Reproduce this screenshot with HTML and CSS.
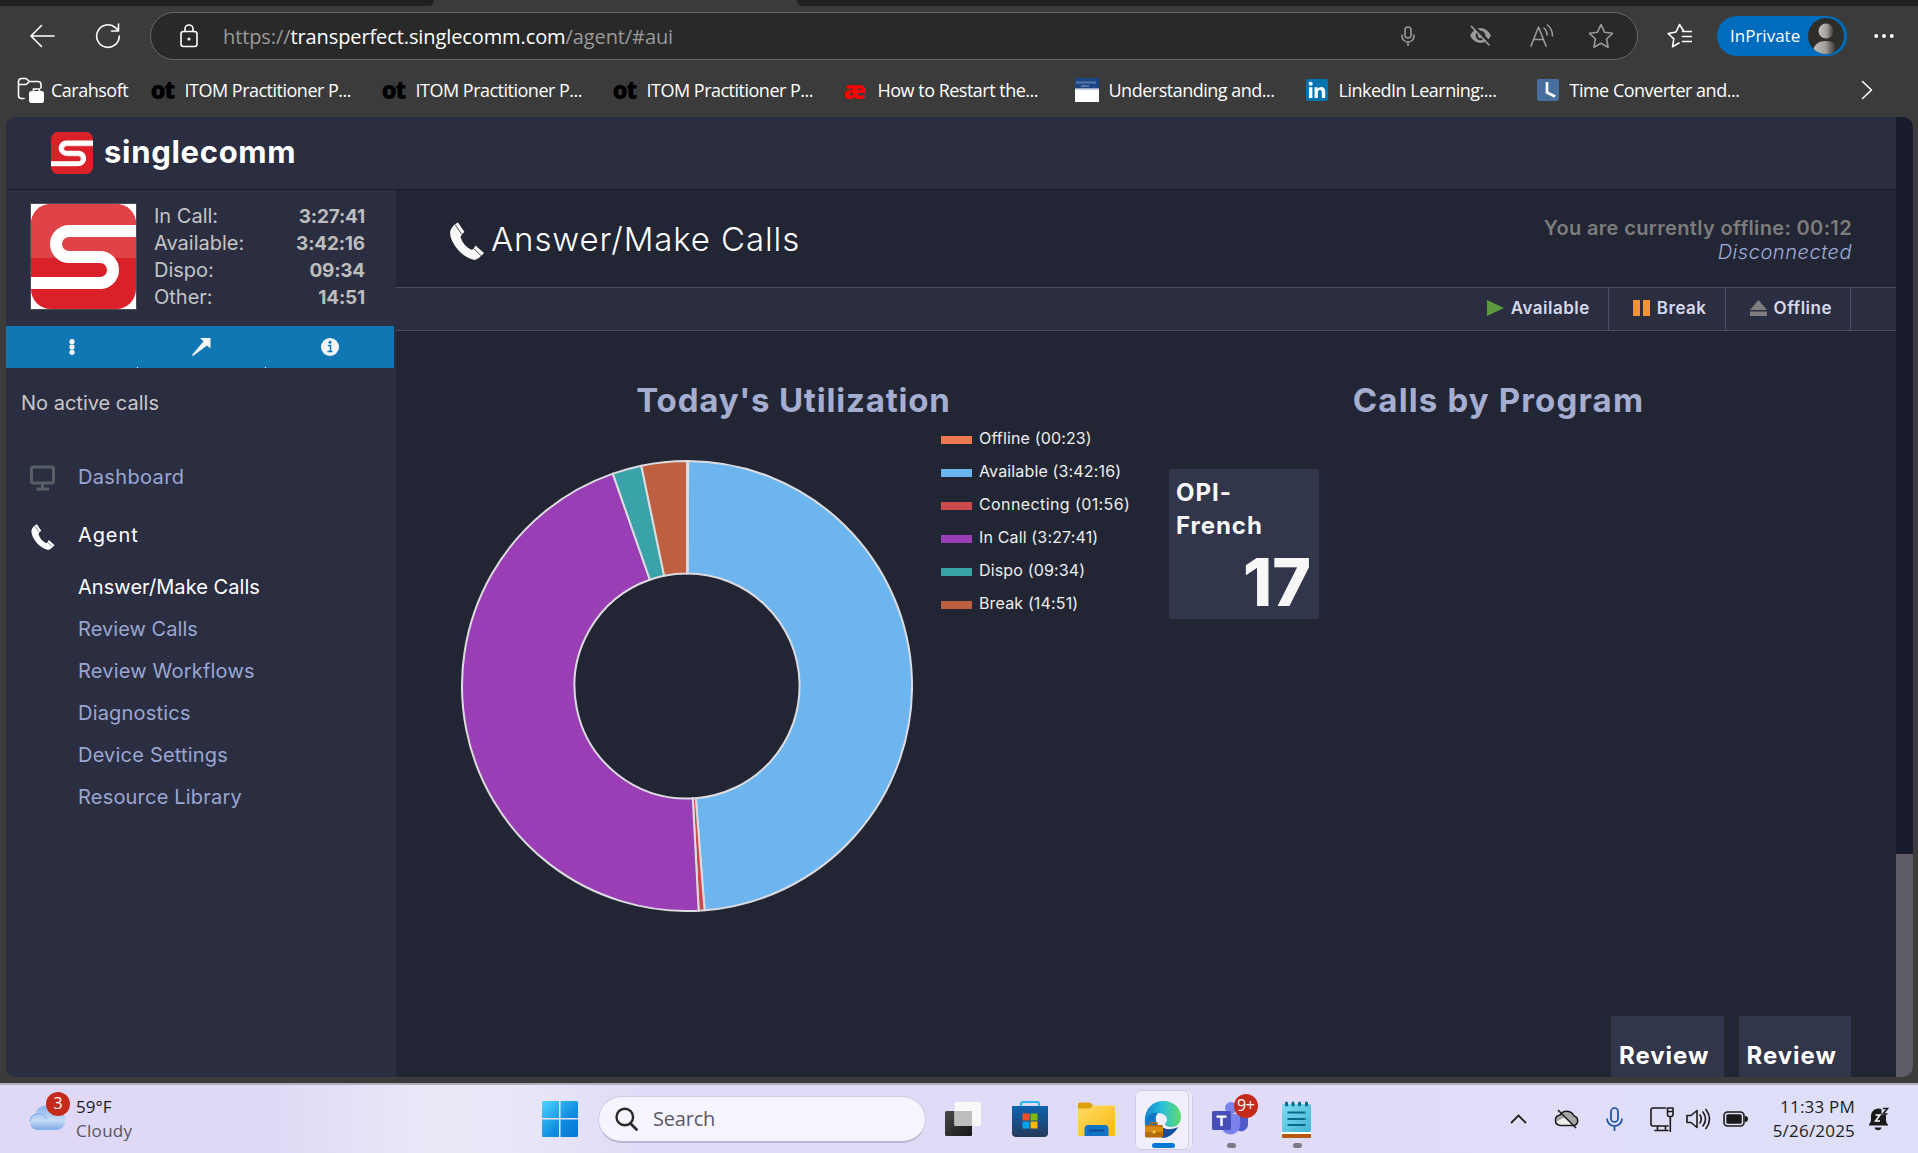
FILE: index.html
```html
<!DOCTYPE html>
<html lang="en">
<head>
<meta charset="utf-8">
<title>singlecomm – Answer/Make Calls</title>
<link rel="stylesheet" href="styles.css">
</head>
<body>
<div class="tabstrip"><div class="tab-active"></div></div>

<div class="toolbar">
  <svg class="nav-back" width="26" height="24" viewBox="0 0 26 24"><path d="M25 12H2M12.500 1.500 2 12l10.500 10.500" class="ln-w"/></svg>
  <svg class="nav-reload" width="26" height="26" viewBox="0 0 26 26"><path d="M24.300 13A11.300 11.300 0 1 1 20.500 4.600L23 7.500M23.500 1v7h-7" class="ln-w"/></svg>
  <div class="address">
    <svg width="18" height="24" viewBox="0 0 18 24"><rect x="1" y="7.500" width="16" height="15" rx="2.500" class="ln-w"/><path d="M5 7.500V5a4 4 0 0 1 8 0v2.500" class="ln-w"/><circle cx="9" cy="15" r="1.600" fill="#fff"/></svg>
    <span class="url">https://<b>transperfect.singlecomm.com</b>/agent/#aui</span>
    <svg class="ic-mic" width="14" height="20" viewBox="0 0 14 20"><rect x="4" y="1" width="6" height="11" rx="3" class="ln-g"/><path d="M1 9v1a6 6 0 0 0 12 0V9M7 16v4" class="ln-g"/></svg>
    <svg class="ic-eye" width="23" height="22" viewBox="0 0 23 22"><path d="M1 10.500Q5 3 11.500 3T22 10.500Q18 18 11.500 18T1 10.500z" fill="#9a9a9a"/><circle cx="11.500" cy="10.500" r="4.800" fill="#292929"/><circle cx="11.500" cy="10.500" r="2.600" fill="#9a9a9a"/><path d="M3.500 0 22 19" stroke="#292929" stroke-width="3"/><path d="M2 1l18.500 19.500" stroke="#9a9a9a" stroke-width="1.800"/></svg>
    <svg class="ic-read" width="24" height="24" viewBox="0 0 24 24"><path d="M1 22 8.500 3 16 22M3.700 15.500h9.600M14 4q3 2.500 3.200 7M17.500 1q4.800 4 5 11" class="ln-g"/></svg>
    <svg class="ic-star" width="26" height="26" viewBox="0 0 26 26"><path d="m13 1.700 3.500 7.500 8 1.100-5.900 5.700 1.500 8.200-7.100-4-7.100 4 1.500-8.200L1.500 10.300l8-1.100z" class="ln-g"/></svg>
  </div>
  <svg class="ic-fav" width="25" height="26" viewBox="0 0 25 26"><path d="M24 8.500h-7L12.500 1.500 9 9 1.200 10.500l5.600 5.300-1.300 8L12 20M15.500 13.500H25M15.500 18.500H25M15.500 8.500H25" class="ln-w"/></svg>
  <div class="inprivate"><span>InPrivate</span>
    <svg width="36" height="36" viewBox="0 0 36 36"><defs><clipPath id="av"><circle cx="18" cy="18" r="18"/></clipPath><linearGradient id="sil"><stop offset="0" stop-color="#c4c0bd"/><stop offset=".55" stop-color="#a29e9b"/><stop offset="1" stop-color="#3a3836"/></linearGradient></defs><g clip-path="url(#av)"><rect width="36" height="36" fill="#302e2b"/><circle cx="18" cy="13" r="7.500" fill="url(#sil)"/><path d="M5 36q0-13 13-13t8 13z" fill="url(#sil)"/></g></svg>
  </div>
  <svg class="ic-more" width="20" height="6" viewBox="0 0 20 6"><g fill="#fff"><circle cx="2.200" cy="3" r="1.900"/><circle cx="10" cy="3" r="1.900"/><circle cx="17.800" cy="3" r="1.900"/></g></svg>
</div>

<div class="bookmarks">
  <div class="bm bm-folder"><svg width="27" height="26" viewBox="0 0 27 26"><path d="M7 21.500H4.500a3 3 0 0 1-3-3V4.500a3 3 0 0 1 3-3H9l3.500 3H21a3 3 0 0 1 3 3V11M1.500 7.500h7.500l3.500-3" class="ln-w"/><rect x="12" y="14" width="15" height="12" rx="2.500" fill="#fff"/><path d="M16.500 14v-2h6v2" fill="none" stroke="#fff" stroke-width="1.600"/></svg><span>Carahsoft</span></div>
  <div class="bm"><i class="fav-ot">ot</i><span>ITOM Practitioner P...</span></div>
  <div class="bm"><i class="fav-ot">ot</i><span>ITOM Practitioner P...</span></div>
  <div class="bm"><i class="fav-ot">ot</i><span>ITOM Practitioner P...</span></div>
  <div class="bm"><i class="fav-ot fav-ae">æ</i><span>How to Restart the...</span></div>
  <div class="bm"><svg width="24" height="24" viewBox="0 0 24 24"><rect width="24" height="24" fill="#fff"/><rect width="24" height="10" fill="#1b4584"/><rect y="10" width="24" height="1.500" fill="#93a7c4"/><path d="M1 4.500h20M6 8h8" stroke="#5877a6" stroke-width="2"/></svg><span>Understanding and...</span></div>
  <div class="bm"><svg width="22" height="22" viewBox="0 0 22 22"><rect width="22" height="22" rx="2" fill="#0073b1"/><g fill="#fff"><circle cx="4.700" cy="4.700" r="2"/><path d="M3 8.200h3.400V19H3zM8.500 8.200h3.200v1.500q1.200-1.800 3.500-1.800 4 0 4 4.800V19h-3.400v-5.700q0-2.500-1.900-2.500-2 0-2 2.500V19H8.500z"/></g></svg><span>LinkedIn Learning:...</span></div>
  <div class="bm"><svg width="22" height="22" viewBox="0 0 22 22"><rect width="22" height="22" rx="2" fill="#48709f"/><path d="M10 3v10.500l8 4" fill="none" stroke="#fff" stroke-width="2.600"/></svg><span>Time Converter and...</span></div>
  <svg class="bm-next" width="12" height="20" viewBox="0 0 12 20"><path d="m1.500 1.500 9 8.500-9 8.500" class="ln-w"/></svg>
</div>

<div class="window">
  <div class="app">
    <header class="app-header">
      <svg width="42" height="42" viewBox="0 0 105 105"><rect width="105" height="105" rx="17" fill="#da2028"/><path d="M105 30H40a12.500 12.500 0 0 0 0 25H67a12.500 12.500 0 0 1 0 25H0" fill="none" stroke="#f3c9cc" stroke-width="11"/><path d="M105 27H38a13 13 0 0 0 0 26H69a13 13 0 0 1 0 26H0" fill="none" stroke="#fff" stroke-width="12"/></svg>
      <span class="brand">singlecomm</span>
    </header>
    <div class="app-body">
      <aside class="sidebar">
        <div class="profile">
          <svg class="avatar" width="105" height="105" viewBox="0 0 105 105"><rect width="105" height="105" fill="#fff"/><rect width="105" height="105" rx="20" fill="#da2028"/><path d="M0 54V20A20 20 0 0 1 20 0h65a20 20 0 0 1 20 20v34z" fill="#e04347"/><path d="M105 27H38a13 13 0 0 0 0 26H69a13 13 0 0 1 0 26H0" fill="none" stroke="#fff" stroke-width="12"/></svg>
          <dl class="stats">
            <div><dt>In Call:</dt><dd>3:27:41</dd></div>
            <div><dt>Available:</dt><dd>3:42:16</dd></div>
            <div><dt>Dispo:</dt><dd>09:34</dd></div>
            <div><dt>Other:</dt><dd>14:51</dd></div>
          </dl>
        </div>
        <div class="quickbar">
          <div><svg width="6" height="16" viewBox="0 0 6 16"><g fill="#f5f5f5"><circle cx="3" cy="2.700" r="2.600"/><circle cx="3" cy="8" r="2.600"/><circle cx="3" cy="13.300" r="2.600"/></g></svg></div>
          <div><svg width="19" height="18" viewBox="0 0 19 18"><path d="M8 0h10.500v10.500L15 7.500 1 18 0 17 11.500 3.300z" fill="#f5f5f5"/></svg></div>
          <div><svg width="18" height="18" viewBox="0 0 18 18"><circle cx="9" cy="9" r="9" fill="#f5f5f5"/><path d="M6.800 7.500H9.500V13M6.500 13.500h5" fill="none" stroke="#0f78b4" stroke-width="1.500"/><circle cx="9" cy="4.300" r="1.500" fill="#0f78b4"/></svg></div>
        </div>
        <p class="no-calls">No active calls</p>
        <nav>
          <a class="nav-item"><svg width="26" height="26" viewBox="0 0 26 26"><rect x="1.500" y="2" width="22" height="16" rx="2" fill="none" stroke="#566067" stroke-width="3"/><path d="M12.500 18v5M6.500 24h12.500" stroke="#566067" stroke-width="3"/></svg><span>Dashboard</span></a>
          <a class="nav-item on"><svg class="phone" width="26" height="26" viewBox="0 0 36 38"><path d="M1 10Q3 3 9 .5L15.500 10Q12 12 11.500 15 14 24 23 28 25 27 26.500 23.500L35 31Q31 36 26 38 18 37 10 29 1 19 1 10Z" fill="#fff"/><path d="M6 2.500 12.500 12M24.500 26.500 32.500 34" stroke="#2b2e41" stroke-width=".8"/></svg><span class="agent">Agent</span></a>
          <a class="sub on">Answer/Make Calls</a>
          <a class="sub">Review Calls</a>
          <a class="sub">Review Workflows</a>
          <a class="sub">Diagnostics</a>
          <a class="sub">Device Settings</a>
          <a class="sub">Resource Library</a>
        </nav>
      </aside>
      <main>
        <div class="page-head">
          <svg width="36" height="38" viewBox="0 0 36 38"><path d="M1 10Q3 3 9 .5L15.500 10Q12 12 11.500 15 14 24 23 28 25 27 26.500 23.500L35 31Q31 36 26 38 18 37 10 29 1 19 1 10Z" fill="#f8f8f8"/><path d="M6 2.500 12.500 12M24.500 26.500 32.500 34" stroke="#222634" stroke-width=".8"/></svg>
          <h1>Answer/Make Calls</h1>
          <div class="status"><b>You are currently offline: 00:12</b><em>Disconnected</em></div>
        </div>
        <div class="actions">
          <button><svg width="17" height="16" viewBox="0 0 17 16"><path d="M0 0 17 8 0 16z" fill="#5c9a3b"/></svg>Available</button>
          <button><svg width="17" height="16" viewBox="0 0 17 16"><path d="M0 0h7v16H0zM10 0h7v16h-7z" fill="#f39237"/></svg>Break</button>
          <button><svg width="17" height="16" viewBox="0 0 17 16"><path d="M8.500 0 17 10H0zM0 11.500h17V16H0z" fill="#7e7e7e"/></svg>Offline</button>
        </div>
        <div class="panels">
          <section>
            <h2>Today's Utilization</h2>
            <div class="util">
              <svg class="donut" width="452" height="452" viewBox="0 0 452 452"><g stroke="#dcdce0" stroke-width="2" stroke-linejoin="round">
                <path fill="#6cb5ee" d="M227.190 1A225 225 0 0 1 243.600 450.310L234.800 338.160A112.500 112.500 0 0 0 226.590 113.500Z"/>
                <path fill="#cb4b4b" d="M243.600 450.310A225 225 0 0 1 237.630 450.700L231.810 338.350A112.500 112.500 0 0 0 234.800 338.160Z"/>
                <path fill="#9a3eb6" d="M237.630 450.700A225 225 0 0 1 151.830 13.580L188.920 119.790A112.500 112.500 0 0 0 231.810 338.350Z"/>
                <path fill="#3aa3a9" d="M151.830 13.580A225 225 0 0 1 180.350 5.680L203.170 115.840A112.500 112.500 0 0 0 188.920 119.790Z"/>
                <path fill="#be6040" d="M180.350 5.680A225 225 0 0 1 226 1L226 113.500A112.500 112.500 0 0 0 203.170 115.840Z"/>
                <path fill="#ef7a50" d="M226 1A225 225 0 0 1 227.190 1L226.590 113.500A112.500 112.500 0 0 0 226 113.500Z"/>
              </g></svg>
              <ul class="legend">
                <li><i class="c-offline"></i>Offline (00:23)</li>
                <li><i class="c-available"></i>Available (3:42:16)</li>
                <li class="wide"><i class="c-connecting"></i>Connecting (01:56)</li>
                <li><i class="c-incall"></i>In Call (3:27:41)</li>
                <li><i class="c-dispo"></i>Dispo (09:34)</li>
                <li><i class="c-break"></i>Break (14:51)</li>
              </ul>
            </div>
          </section>
          <section>
            <h2 class="by-program">Calls by Program</h2>
            <div class="program"><span>OPI-French</span><strong>17</strong></div>
          </section>
        </div>
        <div class="reviews"><div>Review</div><div>Review</div></div>
      </main>
    </div>
  </div>
  <div class="scroll"><div class="thumb"></div></div>
</div>

<footer class="taskbar">
  <div class="weather">
    <div class="weather-icon">
      <svg width="37" height="28" viewBox="0 0 37 28"><defs><linearGradient id="cl" x2="0" y2="1"><stop offset="0" stop-color="#86b0ee"/><stop offset=".6" stop-color="#c6dcf6"/><stop offset="1" stop-color="#7da9ea"/></linearGradient></defs><path d="M8 28A8 8 0 0 1 6.500 12.500 10.500 10.500 0 0 1 26 9a9.500 9.500 0 0 1 2 19z" fill="url(#cl)"/><path d="M1 19a9 9 0 0 1 17-2" fill="none" stroke="#84aeea" stroke-width="1.200"/></svg>
      <span class="badge">3</span>
    </div>
    <div class="weather-text"><span>59°F</span><span class="dim">Cloudy</span></div>
  </div>
  <svg class="start" width="36" height="36" viewBox="0 0 36 36"><defs><linearGradient id="win" x2="1" y2="1"><stop offset="0" stop-color="#4fd3fb"/><stop offset=".6" stop-color="#0f8be0"/><stop offset="1" stop-color="#0075d2"/></linearGradient></defs><path d="M1.500 0H17v17H0V1.500A1.500 1.500 0 0 1 1.500 0zM18.500 0h16A1.500 1.500 0 0 1 36 1.500V17H18.500zM0 18.500h17V36H1.500A1.500 1.500 0 0 1 0 34.500zM18.500 18.500H36v16a1.500 1.500 0 0 1-1.500 1.500h-16z" fill="url(#win)"/></svg>
  <div class="search"><svg width="23" height="24" viewBox="0 0 23 24"><circle cx="9.800" cy="10" r="8.300" fill="none" stroke="#2a2a2a" stroke-width="2.400"/><path d="m15.500 16.500 6 6" stroke="#2a2a2a" stroke-width="2.800" stroke-linecap="round"/></svg><span>Search</span></div>
  <div class="apps">
    <div><svg width="36" height="34" viewBox="0 0 36 34"><defs><linearGradient id="tv" x2="1" y2="1"><stop offset="0" stop-color="#4a4a4a"/><stop offset="1" stop-color="#161616"/></linearGradient></defs><rect y="9" width="27" height="25" rx="1.500" fill="url(#tv)"/><rect x="9.500" width="26.500" height="24" rx="1.500" fill="#f8f8f8"/><path d="M9.500 9H27v15H9.500z" fill="#bdbdbd"/></svg></div>
    <div><svg width="36" height="36" viewBox="0 0 36 36"><defs><linearGradient id="st" x2="0" y2="1"><stop offset="0" stop-color="#0d63b0"/><stop offset="1" stop-color="#253a5c"/></linearGradient></defs><path d="M9 7V3a2 2 0 0 1 2-2h14a2 2 0 0 1 2 2v4" fill="none" stroke="#2cb5ee" stroke-width="2.200"/><path d="M0 5h36v27a4 4 0 0 1-4 4H4a4 4 0 0 1-4-4z" fill="url(#st)"/><path d="M10.500 12.500h7v7h-7z" fill="#f25022"/><path d="M18.500 12.500h7v7h-7z" fill="#7fba00"/><path d="M10.500 20.500h7v7h-7z" fill="#00a4ef"/><path d="M18.500 20.500h7v7h-7z" fill="#ffb900"/></svg></div>
    <div><svg width="37" height="34" viewBox="0 0 37 34"><defs><linearGradient id="fo" x2="1" y2="1"><stop offset="0" stop-color="#ffdc66"/><stop offset="1" stop-color="#fbb80f"/></linearGradient></defs><path d="M0 8V2a1.500 1.500 0 0 1 1.500-1.500H12L15.500 4v4z" fill="#dfa00d"/><path d="M0 6.500h12L15 3.500h20.500A1.500 1.500 0 0 1 37 5v27.500A1.500 1.500 0 0 1 35.500 34h-34A1.500 1.500 0 0 1 0 32.500z" fill="url(#fo)"/><path d="M6.500 34v-7a4 4 0 0 1 4-4h16a4 4 0 0 1 4 4v7z" fill="#1173c6"/><path d="M11 28.500h15" stroke="#0a4f92" stroke-width="2"/></svg></div>
    <div class="running active"><svg width="38" height="37" viewBox="0 0 38 37"><defs><linearGradient id="e1"><stop offset="0" stop-color="#1487d6"/><stop offset=".5" stop-color="#2cc0d8"/><stop offset="1" stop-color="#62dc6c"/></linearGradient></defs><path d="M1 24C-1 8 9 0 19 0c12 0 18 8 18 16 0 6-4 10-9 10-4 0-7-1-7-3 0-1 2-1.500 2-4 0-4-4-7-9-7C7 12 2 17 1 24z" fill="url(#e1)"/><path d="M1 25C1 15 8 11 14 12c-3 3-3 8 0 13z" fill="#0f76c6"/><path d="M17 25c3 4 11 4 17 1-3 6-9 11-16 11z" fill="#11509a"/><rect x="1" y="24" width="18" height="12.500" rx="1.500" fill="#b56a0b"/><path d="M1 25.500h18V31H1z" fill="#d98a12"/><path d="M6.500 24v-2h6.500v2" fill="none" stroke="#b56a0b" stroke-width="1.500"/><circle cx="10" cy="31" r="1.500" fill="#ffd452"/></svg></div>
    <div class="running"><svg width="37" height="36" viewBox="0 0 37 36"><circle cx="19" cy="7" r="6" fill="#7b83eb"/><path d="M25 13h11v11a7 7 0 0 1-11 5z" fill="#5059c9"/><path d="M9 13h19v11a9.500 9.500 0 0 1-19 0z" fill="#7b83eb"/><rect y="10" width="19" height="19" rx="1.500" fill="#464eb8"/><path d="M4.500 14.500h10v2.300h-3.800V25H8.300v-8.200H4.500z" fill="#fff"/></svg><span class="badge">9+</span></div>
    <div class="running"><svg width="29" height="37" viewBox="0 0 29 37"><defs><linearGradient id="np" x2="1" y2="1"><stop offset="0" stop-color="#7fdcf0"/><stop offset="1" stop-color="#42b4d4"/></linearGradient></defs><rect y="31" width="29" height="6" rx="1" fill="#b35a10"/><rect y="28" width="29" height="5" fill="#fff"/><rect y="3" width="29" height="28" rx="1.500" fill="url(#np)"/><path d="M5.500 11.500h18M5.500 18h18M5.500 24h18" stroke="#0a6a8c" stroke-width="2"/><path d="M4.500 2v2M11 2v2M17.500 2v2M24.500 2v2" stroke="#0a6a8c" stroke-width="3" stroke-linecap="round"/></svg></div>
  </div>
  <div class="tray">
    <svg width="17" height="10" viewBox="0 0 17 10"><path d="m1 9 7.500-7.500L16 9" fill="none" stroke="#222" stroke-width="1.800"/></svg>
    <svg class="gap-l" width="25" height="20" viewBox="0 0 25 20"><path d="M6 16.500a5.300 5.300 0 0 1 0-10.500 8 8 0 0 1 14 1 4.900 4.900 0 0 1 0 9.500z" fill="#a5a5a5"/><path d="m2 13 9-5 10 8.500H6z" fill="#eee"/><path d="M6 16.500a5.300 5.300 0 0 1 0-10.500 8 8 0 0 1 14 1 4.900 4.900 0 0 1 0 9.500z" fill="none" stroke="#1c1c1c" stroke-width="1.500"/><path d="m4 1 18 18" stroke="#1c1c1c" stroke-width="1.600"/></svg>
    <svg class="gap-l" width="17" height="24" viewBox="0 0 17 24"><rect x="5" y="1" width="7" height="14" rx="3.500" fill="none" stroke="#1450a0" stroke-width="1.700"/><path d="M1 11.500a7.500 7.500 0 0 0 15 0M8.500 19v5" fill="none" stroke="#1450a0" stroke-width="1.700"/></svg>
    <svg class="gap-l" width="24" height="25" viewBox="0 0 24 25"><path d="M15.500 1H3a2 2 0 0 0-2 2v14a2 2 0 0 0 2 2h15M7.500 19v4.500M15.500 19v4.500M5 23.500h13M17.500 1h5.500v6.500a2 2 0 0 1-2 2h-1.500a2 2 0 0 1-2-2zM17.500 4.500H23M20.300 9.500V24.500" class="ln-k"/></svg>
    <svg class="gap-s" width="25" height="22" viewBox="0 0 25 22"><path d="M1 7.500v7h4l6 5V2.500l-6 5zM14 7q2.500 4 0 8M17 4q5 7 0 14M20 1.500q7 9.500 0 19" class="ln-k"/></svg>
    <svg class="gap-s" width="25" height="16" viewBox="0 0 25 16"><rect x="1" y="1" width="20" height="14" rx="3.500" class="ln-k"/><rect x="3.300" y="3.300" width="15.400" height="9.400" rx="1.500" fill="#1a1a1a"/><path d="M22 5q3 0 3 3t-3 3z" fill="#1a1a1a"/></svg>
    <div class="clock"><span>11:33 PM</span><span>5/26/2025</span></div>
    <svg class="bell" width="21" height="24" viewBox="0 0 21 24"><path d="M1 17.500q2-2 2-5V9a7.500 7.500 0 0 1 12-6v4h3v6q0 3 2 4.500v1H1z" fill="#1a1a1a"/><path d="M6.500 20.500h7a3.600 3.600 0 0 1-7 0z" fill="#1a1a1a"/><path d="M7.500 8h4.500l-4.500 6h4.500" fill="none" stroke="#fff" stroke-width="1.500"/><path d="M13.500 0H21v8h-7.500z" fill="#dfdff9"/><path d="M15 1.500h4.500L15 7h4.500" fill="none" stroke="#1a1a1a" stroke-width="1.600"/></svg>
  </div>
</footer>
</body>
</html>
```
FILE: styles.css
```css
* { box-sizing: border-box; }
body {
  margin: 0;
  width: 1918px;
  height: 1153px;
  overflow: hidden;
  display: flex;
  flex-direction: column;
  background: #3b3b3b;
  color: #fff;
  font-family: "Open Sans", "Noto Sans", sans-serif;
}
svg { display: block; flex: none; }
.ln-w { fill: none; stroke: #fff; stroke-width: 1.6; stroke-linecap: round; stroke-linejoin: round; }
.ln-g { fill: none; stroke: #9a9a9a; stroke-width: 1.6; stroke-linecap: round; stroke-linejoin: round; }
.ln-k { fill: none; stroke: #1a1a1a; stroke-width: 1.6; stroke-linecap: round; stroke-linejoin: round; }

/* Browser chrome */
.tabstrip { flex: none; height: 6px; background: #202020; padding-left: 430px; }
.tab-active { width: 371px; height: 6px; background: #3b3b3b; clip-path: polygon(4px 0, 367px 0, 368px 4px, 371px 6px, 0 6px, 3px 4px); }
.toolbar { flex: none; height: 60px; display: flex; align-items: center; padding-left: 29px; padding-right: 24px; }
.nav-reload { margin-left: 40px; }
.address {
  margin-left: 29px;
  width: 1488px;
  height: 48px;
  display: flex;
  align-items: center;
  padding: 0 23px 0 29px;
  border: 1.5px solid #666;
  border-radius: 24px;
  background: #292929;
}
.url { margin-left: 25px; margin-right: auto; color: #9a9a9a; font-size: 20px; letter-spacing: -.1px; white-space: nowrap; }
.url b { font-weight: 400; color: #fff; }
.ic-eye { margin-left: 54px; }
.ic-read { margin-left: 38px; }
.ic-star { margin-left: 34px; }
.ic-fav { margin-left: 29px; }
.inprivate {
  margin-left: 25px;
  width: 130px;
  height: 40px;
  display: flex;
  align-items: center;
  justify-content: space-between;
  padding: 0 3px 0 13px;
  border-radius: 20px;
  background: #006cbe;
  font-size: 17px;
}
.inprivate span { position: relative; top: -1px; }
.ic-more { margin-left: auto; }
.bookmarks { flex: none; height: 51px; display: flex; align-items: center; padding: 0 45px 3px 17px; font-size: 18px; letter-spacing: -.5px; }
.bm { width: 231px; display: flex; align-items: center; white-space: nowrap; }
.bm svg, .fav-ot { margin-right: 10px; }
.bm-folder { width: 133.500px; }
.bm-folder svg { margin-right: 7px; }
.bm > svg[width="22"] { margin-right: 11px; }
.fav-ot { width: 24px; color: #000; font: 800 24px/24px "Open Sans", sans-serif; letter-spacing: -1.5px; }
.fav-ae { color: #f00; }
.bm-next { margin-left: auto; }

/* Page viewport */
.window { flex: none; height: 960px; margin: 0 5px 0 6px; display: flex; border-radius: 10px; overflow: hidden; background: #181c2c; }
.scroll { width: 17px; display: flex; flex-direction: column; justify-content: flex-end; }
.thumb { height: 223px; background: #5f5c68; }
.app { width: 1890px; display: flex; flex-direction: column; font-family: Inter, "Liberation Sans", sans-serif; }
.app-header { flex: none; height: 73px; display: flex; align-items: center; padding: 0 0 1px 45px; background: #2b2e41; border-bottom: 1px solid #1a1b24; }
.brand { margin-left: 11px; font-size: 31px; line-height: 40px; font-weight: 700; letter-spacing: .7px; position: relative; top: -1px; }
.app-body { flex: 1; display: flex; min-height: 0; }

/* Sidebar */
.sidebar { width: 390px; background: #2b2e41; padding-top: 13px; font-size: 20px; }
.profile { display: flex; height: 123px; padding: 0 31px 0 24px; }
.avatar { width: 107px; height: 107px; border: 1px solid #4a4c55; }
.stats { flex: 1; margin: 0 0 0 17px; color: #c4c4c4; }
.stats div { display: flex; justify-content: space-between; height: 27px; line-height: 27px; }
.stats dd { margin: 0; color: #bdbdbd; font-size: 19px; font-weight: 700; letter-spacing: -.2px; }
.quickbar { display: grid; grid-template-columns: 132px 128px 128px; width: 388px; height: 42px; background: #0f78b4; }
.quickbar div { display: flex; align-items: center; justify-content: center; padding-bottom: 1px; border-right: 1px solid; border-image: linear-gradient(transparent 40px, #fff 40px) 1; }
.quickbar div:last-child { border: 0; }
.no-calls { margin: 21px 0 32px 15px; line-height: 28px; color: #c8c8c8; }
.nav-item, .sub { display: flex; align-items: center; color: #9aa6d2; }
.nav-item { height: 58px; padding-left: 24px; }
.nav-item svg { margin-right: 22px; }
.phone { position: relative; top: 1px; }
.nav-item span { position: relative; top: -1px; letter-spacing: .35px; }
.nav-item .agent { letter-spacing: .9px; }
.sub { height: 42px; padding: 2px 0 0 72px; letter-spacing: .05px; }
.sub:nth-of-type(n+5) { letter-spacing: .2px; }
.on { color: #fff; }

/* Main area */
main { flex: 1; display: flex; flex-direction: column; background: #222634; }
.page-head { flex: none; height: 97px; display: flex; align-items: center; padding: 0 44px 0 53px; }
.page-head > svg { position: relative; top: 2px; }
h1 { margin: 0 0 0 6px; font-size: 33px; line-height: 40px; font-weight: 300; letter-spacing: .9px; }
.status { margin-left: auto; text-align: right; font-size: 20px; line-height: 24px; padding-top: 3px; }
.status b, .status em { display: block; }
.status b { color: #7c7c7c; font-weight: 600; letter-spacing: .35px; }
.status em { color: #a0acd8; letter-spacing: .55px; font-weight: 300; }
.actions { flex: none; height: 44px; display: flex; justify-content: flex-end; padding-right: 45px; background: #2b2e41; border: solid #4b4f64; border-width: 1px 0; }
.actions button {
  display: flex;
  align-items: center;
  gap: 7px;
  padding: 0 18px 2px 24px;
  border: 0;
  border-right: 1px solid #4b4f64;
  background: none;
  color: #d6d9ec;
  font: 600 17px/20px Inter, sans-serif;
  letter-spacing: .5px;
}
.panels { display: flex; padding: 49px 45px 0; }
.panels section { width: 705px; }
h2 { margin: 0; text-align: center; font-size: 33px; line-height: 40px; font-weight: 700; color: #a5aed0; letter-spacing: .8px; }
.by-program { letter-spacing: 1.15px; }
.util { display: flex; padding-left: 20px; padding-top: 3px; }
.donut { margin-top: 37px; }
.legend { list-style: none; margin: 0 0 0 28px; padding: 0; font-size: 16px; letter-spacing: .15px; color: #eee; }
.legend li { display: flex; height: 33px; line-height: 30px; white-space: nowrap; }
.legend .wide { letter-spacing: .4px; }
.legend i { width: 31px; height: 8px; margin: 13px 7px 0 0; }
.c-offline { background: #ef7a50; }
.c-available { background: #6cb5ee; }
.c-connecting { background: #cb4b4b; }
.c-incall { background: #9a3eb6; }
.c-dispo { background: #3aa3a9; }
.c-break { background: #be6040; }
.program { margin: 49px 0 0 23px; width: 150px; height: 150px; padding: 7px 8px 0 7px; background: #32364a; color: #f7f7f7; }
.program span { display: block; width: 100px; font-size: 24px; line-height: 33px; font-weight: 700; letter-spacing: .95px; }
.program strong { display: block; text-align: right; font-size: 66px; line-height: 80px; font-weight: 800; }
.reviews { margin-top: auto; height: 61px; display: flex; justify-content: flex-end; gap: 15px; padding-right: 45px; }
.reviews div { width: 112.500px; padding-left: 8px; background: #32364a; font-size: 24px; line-height: 79px; font-weight: 700; letter-spacing: .95px; }

/* Taskbar */
.taskbar { flex: none; margin-top: 6px; height: 70px; display: flex; align-items: center; border-top: 2px solid #b1afbf; background: linear-gradient(90deg, #dfd9f6 0, #dfd8f6 260px, #ebe9f8 440px, #e9e6f8 520px, #dfdbf7 650px, #e0dcf8 1300px, #dfdff9 1918px); color: #1c1c1c; font-size: 17px; line-height: 24px; }
.weather { width: 542px; padding-left: 29px; display: flex; align-items: center; }
.weather-icon { position: relative; width: 37px; height: 28px; margin-right: 10px; top: -3px; }
.weather-text, .clock { display: flex; flex-direction: column; }
.dim { color: #56545f; letter-spacing: .3px; }
.badge { position: absolute; left: 16px; top: -23px; width: 24px; height: 24px; border-radius: 50%; background: #c42b1c; color: #fff; font-size: 16px; line-height: 23px; text-align: center; }
.weather-icon .badge { top: -10px; left: 17px; }
.search { margin-left: 20px; width: 328px; height: 47px; display: flex; align-items: center; padding-left: 16px; border: 1px solid #cfcae2; border-bottom: 2px solid #bcb6d4; border-radius: 24px; background: #f6f4fe; color: #5b5963; font-size: 20px; letter-spacing: -.2px; }
.search span { margin-left: 15px; }
.apps { margin-left: 4px; display: grid; grid-template-columns: repeat(6, 66.7px); height: 68px; }
.apps > div { position: relative; display: flex; align-items: center; justify-content: center; }
.apps .active::before { content: ""; position: absolute; left: 5px; top: 5px; width: 52px; height: 58px; border: 1px solid #d2cde6; border-radius: 6px; background: #f1effc; box-shadow: 4px 0 0 -1px #eeebfa, 5px 0 0 -1px #d2cde6; }
.apps svg { position: relative; }
.running::after { content: ""; position: absolute; left: 30px; bottom: 5px; width: 9px; height: 5px; border-radius: 3px; background: #7c7a86; }
.active::after { left: 22px; width: 23px; background: #0078d4; }
.apps .badge { left: 37px; top: 9px; letter-spacing: -.5px; }
.tray { margin-left: auto; padding-right: 29px; display: flex; align-items: center; }
.gap-l { margin-left: 27px; }
.gap-s { margin-left: 12px; }
.clock { width: 107px; text-align: right; letter-spacing: .2px; }
.bell { margin-left: 13px; }
```
